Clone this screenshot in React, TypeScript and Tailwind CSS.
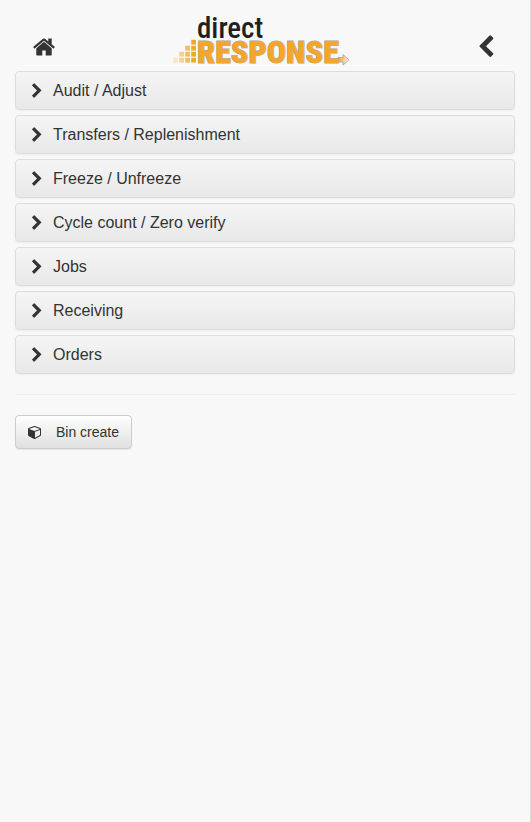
import type { ReactNode } from 'react';

const menuItems = [
  'Audit / Adjust',
  'Transfers / Replenishment',
  'Freeze / Unfreeze',
  'Cycle count / Zero verify',
  'Jobs',
  'Receiving',
  'Orders',
];

// Logo staircase, one entry per column from left to right
const logoColumns = [
  { x: 0, fill: '#fbe3c3', count: 1 },
  { x: 6, fill: '#f8cf94', count: 2 },
  { x: 12, fill: '#f5bb60', count: 3 },
  { x: 18, fill: '#f3a62a', count: 4 },
];

function Icon({ className, viewBox, children }: { className: string; viewBox: string; children: ReactNode }) {
  return (
    <svg className={className} viewBox={viewBox} fill="currentColor" aria-hidden="true">
      {children}
    </svg>
  );
}

function ChevronIcon({ className }: { className: string }) {
  return (
    <Icon className={className} viewBox="0 0 1792 1792">
      <path d="M1363 877l-742 742q-19 19-45 19t-45-19l-166-166q-19-19-19-45t19-45l531-531-531-531q-19-19-19-45t19-45l166-166q19-19 45-19t45 19l742 742q19 19 19 45t-19 45z" />
    </Icon>
  );
}

function HomeIcon({ className }: { className: string }) {
  return (
    <Icon className={className} viewBox="-64 0 1792 1792">
      <path d="M1408 992v480q0 26-19 45t-45 19h-384v-384h-256v384h-384q-26 0-45-19t-19-45v-480q0-1 .5-3t.5-3l575-474 575 474q1 2 1 6zm223-69l-62 74q-8 9-21 11h-3q-13 0-21-7l-692-577-692 577q-12 8-24 7-13-2-21-11l-62-74q-8-10-7-23.5t11-21.5l719-599q32-26 76-26t76 26l244 204v-195q0-14 9-23t23-9h192q14 0 23 9t9 23v408l219 182q10 8 11 21.5t-7 23.5z" />
    </Icon>
  );
}

function CubeIcon({ className }: { className: string }) {
  return (
    <Icon className={className} viewBox="0 0 1792 1792">
      <path d="M896 1629l640-349v-636l-640 233v752zm-64-865l698-254-698-254-698 254zm832-252v768q0 35-18 65t-49 47l-704 384q-28 16-61 16t-61-16l-704-384q-31-17-49-47t-18-65v-768q0-40 23-73t61-47l704-256q22-8 44-8t44 8l704 256q38 14 61 47t23 73z" />
    </Icon>
  );
}

function Logo() {
  return (
    <svg className="h-[50px] w-[184px] overflow-visible" viewBox="0 0 184 50" role="img" aria-label="direct RESPONSE">
      <defs>
        <linearGradient id="arrow" x1="0" x2="1" y1="0" y2="0">
          <stop offset="0" stopColor="#f3a62a" />
          <stop offset="1" stopColor="#fdf1de" />
        </linearGradient>
      </defs>
      <path d="M165 41.5h5v-3l6 5.3-6 5.2v-3h-5z" fill="url(#arrow)" stroke="#a8a39b" strokeWidth="0.8" />
      {logoColumns.map((col) =>
        Array.from({ length: col.count }, (_, row) => (
          <rect key={`${col.x}-${row}`} x={col.x + 0.2} y={41.8 - row * 6} width="4.8" height="4.8" fill={col.fill} />
        ))
      )}
      <text x="24" y="22" fill="#231f20" className="font-['Roboto_Condensed','Roboto',sans-serif] text-[29px] font-medium">
        direct
      </text>
      <text
        x="24"
        y="47"
        fill="#f3a62a"
        stroke="#a8a39b"
        strokeWidth="1"
        paintOrder="stroke"
        className="font-['Roboto_Condensed','Roboto',sans-serif] text-[32px] font-black"
      >
        RESPONSE
      </text>
    </svg>
  );
}

export default function App() {
  return (
    <div className="min-h-screen border-r border-[#ddd] bg-[#f8f8f8] px-[15px] font-['Liberation_Sans',Arial,sans-serif] text-[#333]">
      <header className="flex items-end justify-between px-[17px] pt-4 pb-[5px]">
        <button type="button" aria-label="Home" className="mb-[7px]">
          <HomeIcon className="size-6" />
        </button>
        <Logo />
        <button type="button" aria-label="Back" className="mb-[7px]">
          <ChevronIcon className="size-6 -scale-x-100" />
        </button>
      </header>

      <nav className="flex flex-col gap-[5px]">
        {menuItems.map((item) => (
          <button
            key={item}
            type="button"
            className="flex h-[39px] w-full items-center gap-2 rounded border border-[#ddd] bg-linear-to-b from-[#f5f5f5] to-[#e8e8e8] px-[13px] text-left text-base shadow-[0_1px_2px_rgba(0,0,0,0.05)]"
          >
            <ChevronIcon className="size-4" />
            {item}
          </button>
        ))}
      </nav>

      <hr className="my-5 border-[#eee]" />

      <button
        type="button"
        className="flex h-[34px] items-center gap-[14px] rounded border border-[#ccc] bg-linear-to-b from-white to-[#e0e0e0] px-3 text-sm shadow-[0_1px_1px_rgba(0,0,0,0.08)]"
      >
        <CubeIcon className="size-[14px]" />
        Bin create
      </button>
    </div>
  );
}
